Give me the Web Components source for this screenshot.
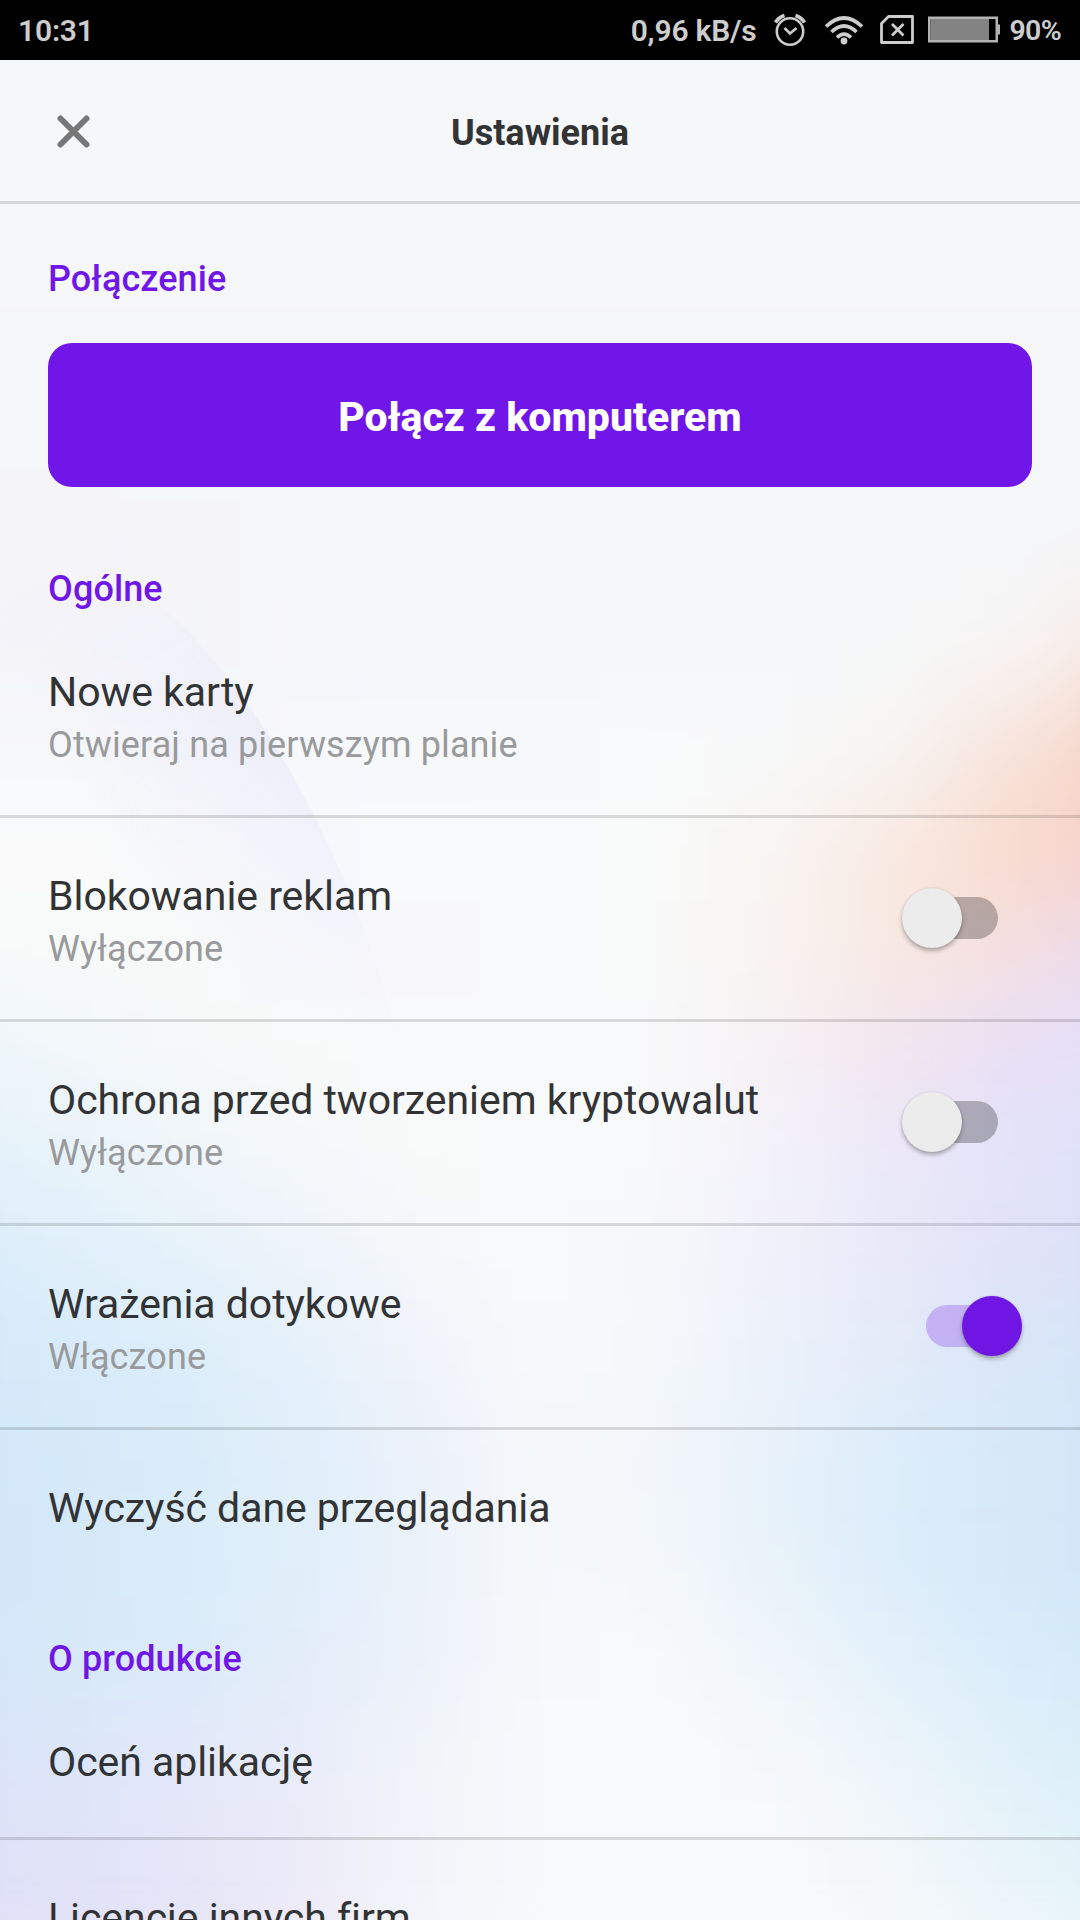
<!DOCTYPE html>
<html lang="pl">
<head>
  <meta charset="UTF-8">
  <title>Ustawienia</title>
  <style>
    body {
      margin: 0;
      overflow: hidden;
      font-family: Roboto, "Liberation Sans", sans-serif;
      color: #323335;
    }
  </style>
</head>
<body>
  <settings-screen>
    <status-bar slot="status" time="10:31" speed="0,96 kB/s" battery="90"></status-bar>
    <title-bar slot="header">Ustawienia</title-bar>
    <settings-section heading="Połączenie">
      <primary-button>Połącz z komputerem</primary-button>
    </settings-section>
    <settings-section heading="Ogólne">
      <settings-row note="Otwieraj na pierwszym planie">Nowe karty</settings-row>
      <settings-row note="Wyłączone" toggle="off">Blokowanie reklam</settings-row>
      <settings-row note="Wyłączone" toggle="off">Ochrona przed tworzeniem kryptowalut</settings-row>
      <settings-row note="Włączone" toggle="on">Wrażenia dotykowe</settings-row>
      <settings-row>Wyczyść dane przeglądania</settings-row>
    </settings-section>
    <settings-section heading="O produkcie">
      <settings-row>Oceń aplikację</settings-row>
      <settings-row>Licencje innych firm</settings-row>
    </settings-section>
  </settings-screen>

  <script>
    // Soft wallpaper: one row per 100px from y=500, one colour per 120px from x=-120
    const WALLPAPER = [
      'f5f4f8 f5f4f8 f5f5f8 f5f6f8 f5f6f8 f5f6f8 f5f6f8 f5f6f8 f5f6f8 f5f6f8 f5f6f8',
      'f4f4f9 f4f4f9 f4f4f9 f6f7f9 f6f7f9 f6f7f9 f6f7f9 f6f7f9 f6f8f8 f7f5f5 f8e5dc',
      'f8f9fb f7f8fb f5f6fa f7f8fb f7f8fa f7f8fa f8f9fa f7f9f9 f7f5f3 f7e1d7 f6cfc2',
      'fafbf9 f9faf9 f8f9fa f7f8fb f8f9fa f8f9fa f8faf9 f8f4f1 f8e7de f9d9cc f5d0c8',
      'f7fafa f8faf9 f8f9f9 f7f8fb f8f8fb f8f9fa f8f9f9 f8f3f0 f8e8e1 f4dfe0 e9d9f2',
      'ecf5fa f1f7fa f6f9f9 f8f9f9 f8f9fa f8f9fa f8f9fa f6f0f4 f1e4ef e7dff7 e2dffa',
      'e3f1fa e8f3fa eff5fa f5f8fa f8f9f9 f8f9fa f8f9fb f2f1fa ebe8f9 e2e3f9 dde1f9',
      'daecfa dfeffa e6f2fa eef3fa f5f8fa f8f9fa f6f7fa f0f0fa e8e8f8 e1e2f8 dadff8',
      'd4e8fa d8ebfa dceefa e5f1fa f0f3fa f8f9fa f4f7fa ebf1fa e3eaf8 d9e6f8 d2e5f7',
      'd1e6f9 d4e9f9 d9ebf9 e0effa ebf1fa f6f8fa f2f6fa e6f1fa dcedfa d6e9f8 d1e5f8',
      'd2e6f9 d4e8f9 daedfa e0effa ebf2f9 f6f8fa f3f7fa e6f1f9 dbecfa d4e8f8 cfe4f8',
      'd4e6f9 d6e9f9 daebf9 e2edf9 ecf2fa f7f8fa f8f9fa eef5fa e2f0fa d8ecfa d3eaf9',
      'd9e2f9 dce6f9 e2e8f9 e9ecf9 f0f4f9 f8f9fa f8f9fa f5f8fa ebf4fa dfeff9 d9edf8',
      'dee0f8 e0e3f8 e5e6f8 ecebf8 f3f4fa f8f9fa f8f9fa f8f9fa f2f7fa e6f3f9 e1f2f9',
      'e0dff8 e1e1f9 e6e4f8 eeebf8 f4f5fa f8f9fa f8f9fa f8f9fa f6f9fa eef6fa e6f4f9',
    ];

    class WallpaperBackdrop extends HTMLElement {
      constructor() {
        super();
        this._shadowRoot = this.attachShadow({ mode: 'open' });
      }

      connectedCallback() {
        const cells = WALLPAPER.map((row, r) => row.split(' ').map((color, c) => (
          `<rect x="${c * 120 - 120}" y="${r * 100 + 500}" width="121" height="101" fill="#${color}"/>`
        )).join('')).join('');

        this._shadowRoot.innerHTML = `
        <style>
        :host {
          position: absolute;
          inset: 0;
        }

        svg {
          display: block;
        }
        </style>
        <svg width="1080" height="1920" viewBox="0 0 1080 1920">
          <defs>
            <filter id="soft" filterUnits="userSpaceOnUse" x="-120" y="300" width="1320" height="1720" color-interpolation-filters="sRGB">
              <feGaussianBlur stdDeviation="48"/>
            </filter>
            <linearGradient id="arc" gradientUnits="userSpaceOnUse" x1="280" y1="760" x2="110" y2="860">
              <stop offset="0" stop-color="#e9e9fa" stop-opacity="0.65"/>
              <stop offset="1" stop-color="#f1f1fa" stop-opacity="0"/>
            </linearGradient>
            <linearGradient id="fade" gradientUnits="userSpaceOnUse" x1="0" y1="570" x2="0" y2="1040">
              <stop offset="0" stop-color="#000"/>
              <stop offset="0.35" stop-color="#fff"/>
              <stop offset="0.5" stop-color="#ccc"/>
              <stop offset="1" stop-color="#000"/>
            </linearGradient>
            <mask id="arcMask"><rect width="1080" height="1920" fill="url(#fade)"/></mask>
          </defs>
          <g filter="url(#soft)">
            <rect x="-120" y="300" width="1320" height="200" fill="#f5f6f8"/>
            ${cells}
          </g>
          <path d="M0 540 Q130 560 205 650 Q335 800 405 1060 L0 1060Z" fill="url(#arc)" mask="url(#arcMask)"/>
        </svg>
        `;
      }
    }

    class SettingsScreen extends HTMLElement {
      constructor() {
        super();
        this._shadowRoot = this.attachShadow({ mode: 'open' });
      }

      connectedCallback() {
        this._shadowRoot.innerHTML = `
        <style>
        :host {
          display: flex;
          flex-direction: column;
          position: relative;
          width: 1080px;
          height: 1920px;
          overflow: hidden;
          background: linear-gradient(#f5f7f9, #f5f6f8 400px);
        }

        main {
          position: relative;
          z-index: 1;
          display: flex;
          flex-direction: column;
        }
        </style>
        <wallpaper-backdrop></wallpaper-backdrop>
        <slot name="status"></slot>
        <slot name="header"></slot>
        <main><slot></slot></main>
        `;
      }
    }

    class StatusBar extends HTMLElement {
      constructor() {
        super();
        this._shadowRoot = this.attachShadow({ mode: 'open' });
      }

      connectedCallback() {
        const battery = Number(this.getAttribute('battery'));
        this._shadowRoot.innerHTML = `
        <style>
        :host {
          position: relative;
          z-index: 1;
          display: flex;
          align-items: center;
          flex: none;
          box-sizing: border-box;
          height: 60px;
          padding: 1px 19px 0 18px;
          background: #000;
          color: #cdcdcd;
          font-size: 30px;
          font-weight: 600;
          letter-spacing: -0.2px;
        }

        .speed {
          margin-left: auto;
        }

        svg {
          display: block;
          flex: none;
        }

        .percent {
          font-size: 28.5px;
          letter-spacing: -0.7px;
        }
        </style>
        <span class="time">${this.getAttribute('time')}</span>
        <span class="speed">${this.getAttribute('speed')}</span>
        <svg style="margin-left: 15px" width="36" height="36" viewBox="0 0 36 36" fill="none" stroke="#cdcdcd">
          <circle cx="18" cy="18.500" r="13.2" stroke-width="2.6"/>
          <path d="M12.500 15l5.500 5.500 6.500-5.500" stroke-width="2.6"/>
          <path d="M3.500 9.500Q6.500 4.500 12.500 2.500M32.500 9.500Q29.500 4.500 23.500 2.500" stroke-width="3.600"/>
        </svg>
        <svg style="margin-left: 16px" width="40" height="36" viewBox="0 0 40 36" fill="none" stroke="#cdcdcd" stroke-width="3.600">
          <path d="M2 13.500Q20 -3.500 38 13.500M7.500 19Q20 7 32.500 19M13 24.500Q20 17.500 27 24.500"/>
          <circle cx="20" cy="28" r="3.400" fill="#cdcdcd" stroke="none"/>
        </svg>
        <svg style="margin-left: 15px" width="36" height="36" viewBox="0 0 36 36" fill="none" stroke="#cdcdcd" stroke-width="2.800">
          <path d="M9.500 3.500H33.500V29.500H2.500V10.500Z" stroke-linejoin="round"/>
          <path d="M13 11l11.500 11.500M24.500 11L13 22.500"/>
        </svg>
        <svg style="margin: 0 10px 1px 13px" width="72" height="28" viewBox="0 0 72 28">
          <rect x="1.250" y="1.750" width="67.500" height="23.500" fill="none" stroke="#b3b3b3" stroke-width="2.500"/>
          <rect x="2.500" y="3" width="${battery * 0.65}" height="21" fill="#838383"/>
          <rect x="70" y="8.500" width="2" height="10" fill="#b3b3b3"/>
        </svg>
        <span class="percent">${battery}%</span>
        `;
      }
    }

    class TitleBar extends HTMLElement {
      constructor() {
        super();
        this._shadowRoot = this.attachShadow({ mode: 'open' });
      }

      connectedCallback() {
        this._shadowRoot.innerHTML = `
        <style>
        :host {
          position: relative;
          z-index: 1;
          display: grid;
          grid-template-columns: 146px 1fr 146px;
          align-items: center;
          flex: none;
          box-sizing: border-box;
          height: 144px;
          padding-top: 4px;
          border-bottom: 3px solid rgba(0, 0, 0, 0.14);
          background: #f5f7f9;
        }

        svg {
          display: block;
          margin: 0 0 3px 57px;
        }

        h1 {
          margin: 0;
          font-size: 36px;
          font-weight: 700;
          line-height: 42px;
          text-align: center;
        }
        </style>
        <svg width="33" height="33" viewBox="0 0 33 33" fill="none" stroke="#777" stroke-width="6" stroke-linecap="round">
          <path d="M3.500 3.500l26 26M29.500 3.500l-26 26"/>
        </svg>
        <h1><slot></slot></h1>
        `;
      }
    }

    class SettingsSection extends HTMLElement {
      constructor() {
        super();
        this._shadowRoot = this.attachShadow({ mode: 'open' });
      }

      connectedCallback() {
        this._shadowRoot.innerHTML = `
        <style>
        :host {
          display: flex;
          flex-direction: column;
          padding-top: 55px;
        }

        :host(:first-of-type) {
          padding-top: 54px;
        }

        h2 {
          margin: 0 48px 4px;
          color: #7016e6;
          font-size: 36px;
          font-weight: 500;
          line-height: 42px;
          letter-spacing: 0.1px;
        }
        </style>
        <h2>${this.getAttribute('heading')}</h2>
        <slot></slot>
        `;
      }
    }

    class PrimaryButton extends HTMLElement {
      constructor() {
        super();
        this._shadowRoot = this.attachShadow({ mode: 'open' });
      }

      connectedCallback() {
        this._shadowRoot.innerHTML = `
        <style>
        :host {
          display: block;
          margin: 39px 48px 26px;
        }

        button {
          display: block;
          width: 100%;
          height: 144px;
          padding: 3px 0 0;
          border: 0;
          border-radius: 24px;
          background: #7016e8;
          color: #fff;
          font: inherit;
          font-size: 41px;
          font-weight: 800;
        }
        </style>
        <button type="button"><slot></slot></button>
        `;
      }
    }

    class ToggleSwitch extends HTMLElement {
      constructor() {
        super();
        this._shadowRoot = this.attachShadow({ mode: 'open' });
      }

      connectedCallback() {
        this._shadowRoot.innerHTML = `
        <style>
        :host {
          display: flex;
          align-items: center;
          position: relative;
          box-sizing: border-box;
          width: 96px;
          height: 60px;
        }

        .track {
          width: 72px;
          height: 42px;
          border-radius: 21px;
          background: rgba(0, 0, 0, 0.26);
        }

        .thumb {
          position: absolute;
          top: 0;
          left: 0;
          width: 60px;
          height: 60px;
          border-radius: 50%;
          background: #ececec;
          box-shadow: 0 3px 4px rgba(0, 0, 0, 0.28), 0 0 2px rgba(0, 0, 0, 0.12);
        }

        :host([state="off"]) {
          justify-content: flex-end;
        }

        :host([state="on"]) .track {
          background: rgba(112, 22, 230, 0.26);
        }

        :host([state="on"]) .thumb {
          left: auto;
          right: 0;
          background: #6f16e4;
        }
        </style>
        <div class="track"></div>
        <div class="thumb"></div>
        `;
      }
    }

    class SettingsRow extends HTMLElement {
      constructor() {
        super();
        this._shadowRoot = this.attachShadow({ mode: 'open' });
      }

      connectedCallback() {
        this._render();
        this._style();
      }

      _render() {
        const note = this.getAttribute('note');
        const toggle = this.getAttribute('toggle');
        this._shadowRoot.innerHTML = `
        <div class="label">
          <div class="name"><slot></slot></div>
          ${note ? `<div class="note">${note}</div>` : ''}
        </div>
        ${toggle ? `<toggle-switch state="${toggle}"></toggle-switch>` : ''}
        `;
      }

      _style() {
        this._shadowRoot.innerHTML += `
        <style>
        :host {
          display: flex;
          justify-content: space-between;
          align-items: flex-start;
          padding: 53px 48px 50px;
          border-bottom: 3px solid rgba(0, 0, 0, 0.13);
          white-space: nowrap;
        }

        :host([note]) {
          padding-bottom: 49px;
        }

        :host(:last-child) {
          border-bottom: 0;
        }

        .name {
          font-size: 41px;
          line-height: 50px;
          letter-spacing: -0.05px;
        }

        .note {
          margin-top: 7px;
          color: #999a9c;
          font-size: 36px;
          line-height: 42px;
          letter-spacing: 0.12px;
        }

        toggle-switch {
          margin: 17px 34px 0 0;
        }

        toggle-switch[state="on"] {
          margin-right: 10px;
        }
        </style>
        `;
      }
    }

    customElements.define('wallpaper-backdrop', WallpaperBackdrop);
    customElements.define('settings-screen', SettingsScreen);
    customElements.define('status-bar', StatusBar);
    customElements.define('title-bar', TitleBar);
    customElements.define('settings-section', SettingsSection);
    customElements.define('primary-button', PrimaryButton);
    customElements.define('toggle-switch', ToggleSwitch);
    customElements.define('settings-row', SettingsRow);
  </script>
</body>
</html>
